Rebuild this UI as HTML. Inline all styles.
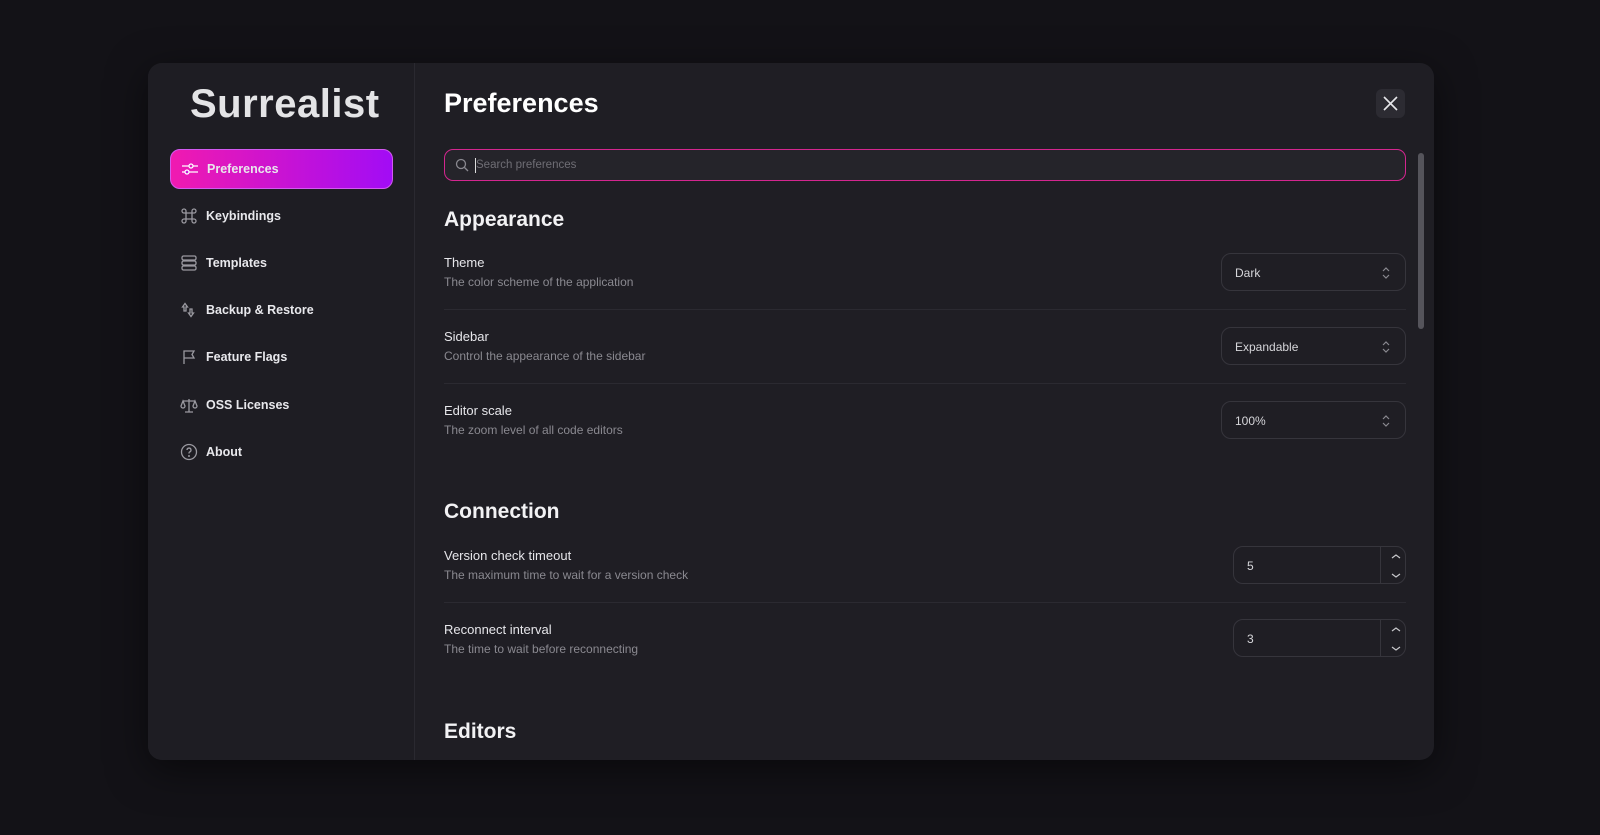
<!DOCTYPE html>
<html><head><meta charset="utf-8"><style>
*{box-sizing:border-box;margin:0;padding:0}
body{width:1600px;height:835px;background:#131217;font-family:"Liberation Sans",sans-serif;position:relative;overflow:hidden;color:#e8e8ec}
.modal{position:absolute;left:148px;top:63px;width:1286px;height:697px;background:#1f1e24;border-radius:14px;overflow:hidden;box-shadow:0 10px 40px rgba(0,0,0,.5)}
.side{position:absolute;left:0;top:0;width:267px;height:100%;border-right:1px solid #2a2930;background:#1e1d23}
.logo{position:absolute;left:42px;top:19px;font-size:40px;font-weight:bold;color:#e4e4e6;letter-spacing:0.5px}
.nav{position:absolute;left:22px;width:223px;height:40px;display:flex;align-items:center;font-size:12.5px;font-weight:bold;color:#e8e8ec}
.nav svg{position:absolute;left:10px}
.nav span{position:absolute;left:36px}
.active{background:linear-gradient(90deg,#f01ab0,#a20cf5);border-radius:10px;border:1px solid #d25af0}
.abs{position:absolute}
h1{position:absolute;left:296px;font-size:27px;font-weight:bold;color:#fff}
.close{position:absolute;left:1228px;top:26px;width:29px;height:29px;background:#2c2b32;border-radius:6px}
.search{position:absolute;left:296px;top:86px;width:962px;height:32px;border:1.5px solid #d3268f;border-radius:9px;background:#25242a}
h2{position:absolute;left:296px;font-size:21px;font-weight:bold;color:#f2f2f4}
.lab{position:absolute;left:296px;font-size:13px;color:#e6e6ea}
.desc{position:absolute;left:296px;font-size:12px;color:#8a8990}
.div{position:absolute;left:296px;width:962px;height:1px;background:#2b2a31}
.sel{position:absolute;left:1073px;width:185px;height:38px;border:1px solid #36353c;border-radius:10px;font-size:12px;color:#d6d6da;padding:12px 13px}
.sel svg{position:absolute;right:14px;top:12px}
.num{position:absolute;left:1085px;width:173px;height:38px;border:1px solid #36353c;border-radius:10px;font-size:12px;color:#d6d6da;padding:12px 13px}
.num .sp{position:absolute;left:146px;top:0;width:1px;height:100%;background:#36353c}
.num svg{position:absolute;left:152px}
.scroll{position:absolute;left:1270px;top:90px;width:6px;height:176px;border-radius:3px;background:#55545b}
</style></head><body>
<div class="modal">
 <div class="side">
  <div class="logo">Surrealist</div>
  <div class="nav active" style="top:86px"><svg width="18" height="18" viewBox="0 0 18 18" fill="none" stroke="#fff" stroke-width="1.3"><path d="M1 6h16M1 12h16"/><circle cx="10" cy="6" r="2" fill="#e01bc0"/><circle cx="6" cy="12" r="2" fill="#c515d8"/></svg><span>Preferences</span></div>
  <div class="nav" style="top:133px"><svg width="18" height="18" viewBox="0 0 18 18" fill="none" stroke="#9a99a0" stroke-width="1.3"><path d="M6 6h6v6H6zM6 6H4a2 2 0 1 1 2-2zM12 6V4a2 2 0 1 1 2 2zM12 12h2a2 2 0 1 1-2 2zM6 12v2a2 2 0 1 1-2-2z"/></svg><span>Keybindings</span></div>
  <div class="nav" style="top:180px"><svg width="18" height="18" viewBox="0 0 18 18" fill="none" stroke="#9a99a0" stroke-width="1.3"><rect x="2" y="2" width="14" height="4" rx="1.5"/><rect x="2" y="7" width="14" height="4" rx="1.5"/><rect x="2" y="12" width="14" height="4" rx="1.5"/></svg><span>Templates</span></div>
  <div class="nav" style="top:227px"><svg width="18" height="18" viewBox="0 0 18 18" fill="none" stroke="#9a99a0" stroke-width="1.3"><path d="M4 10V6H2.5L5 2.5 7.5 6H6v4zM10 8h2v4h1.5L11 15.5 8.5 12H10z"/></svg><span>Backup &amp; Restore</span></div>
  <div class="nav" style="top:274px"><svg width="18" height="18" viewBox="0 0 18 18" fill="none" stroke="#9a99a0" stroke-width="1.3"><path d="M4 16V3h10l-2 3.5 2 3.5H4"/></svg><span>Feature Flags</span></div>
  <div class="nav" style="top:322px"><svg width="18" height="18" viewBox="0 0 18 18" fill="none" stroke="#9a99a0" stroke-width="1.3"><path d="M9 3v13M5 16h8M3 5h12M3 5l-2 5a2 2 0 0 0 4 0zM15 5l-2 5a2 2 0 0 0 4 0z"/></svg><span>OSS Licenses</span></div>
  <div class="nav" style="top:369px"><svg width="18" height="18" viewBox="0 0 18 18" fill="none" stroke="#9a99a0" stroke-width="1.3"><circle cx="9" cy="9" r="7.5"/><path d="M7 7a2 2 0 1 1 2.5 2c-.5.2-.5.6-.5 1.5"/><circle cx="9" cy="13" r=".4"/></svg><span>About</span></div>
 </div>
 <h1 style="top:25px">Preferences</h1>
 <div class="close"><svg width="29" height="29" viewBox="0 0 29 29" stroke="#e6e6ea" stroke-width="1.6"><path d="M8 8l13 13M21 8L8 21"/></svg></div>
 <div class="search"><svg class="abs" style="left:10px;top:8px" width="14" height="14" viewBox="0 0 14 14" fill="none" stroke="#8a8990" stroke-width="1.3"><circle cx="6" cy="6" r="4.5"/><path d="M9.5 9.5L13 13"/></svg><div class="abs" style="left:30px;top:8px;width:1px;height:15px;background:#ddd"></div><div class="abs" style="left:31px;top:9px;font-size:11.5px;color:#6f6e75">Search preferences</div></div>
 <div class="scroll"></div>
 <h2 style="top:145px">Appearance</h2>
 <div class="lab" style="top:192px">Theme</div><div class="desc" style="top:212px">The color scheme of the application</div>
 <div class="sel" style="top:190px">Dark<svg width="10" height="14" viewBox="0 0 10 14" fill="none" stroke="#8a8990" stroke-width="1.2"><path d="M2 5l3-3 3 3M2 9l3 3 3-3"/></svg></div>
 <div class="div" style="top:246px"></div>
 <div class="lab" style="top:266px">Sidebar</div><div class="desc" style="top:286px">Control the appearance of the sidebar</div>
 <div class="sel" style="top:264px">Expandable<svg width="10" height="14" viewBox="0 0 10 14" fill="none" stroke="#8a8990" stroke-width="1.2"><path d="M2 5l3-3 3 3M2 9l3 3 3-3"/></svg></div>
 <div class="div" style="top:320px"></div>
 <div class="lab" style="top:340px">Editor scale</div><div class="desc" style="top:360px">The zoom level of all code editors</div>
 <div class="sel" style="top:338px">100%<svg width="10" height="14" viewBox="0 0 10 14" fill="none" stroke="#8a8990" stroke-width="1.2"><path d="M2 5l3-3 3 3M2 9l3 3 3-3"/></svg></div>
 <h2 style="top:437px">Connection</h2>
 <div class="lab" style="top:485px">Version check timeout</div><div class="desc" style="top:505px">The maximum time to wait for a version check</div>
 <div class="num" style="top:483px">5<div class="sp"></div><svg style="top:4px" width="20" height="30" viewBox="0 0 20 30" fill="none" stroke="#c8c8cc" stroke-width="1.2"><path d="M6 7l4-3 4 3M6 23l4 3 4-3"/></svg></div>
 <div class="div" style="top:539px"></div>
 <div class="lab" style="top:559px">Reconnect interval</div><div class="desc" style="top:579px">The time to wait before reconnecting</div>
 <div class="num" style="top:556px">3<div class="sp"></div><svg style="top:4px" width="20" height="30" viewBox="0 0 20 30" fill="none" stroke="#c8c8cc" stroke-width="1.2"><path d="M6 7l4-3 4 3M6 23l4 3 4-3"/></svg></div>
 <h2 style="top:657px">Editors</h2>
</div>
</body></html>
